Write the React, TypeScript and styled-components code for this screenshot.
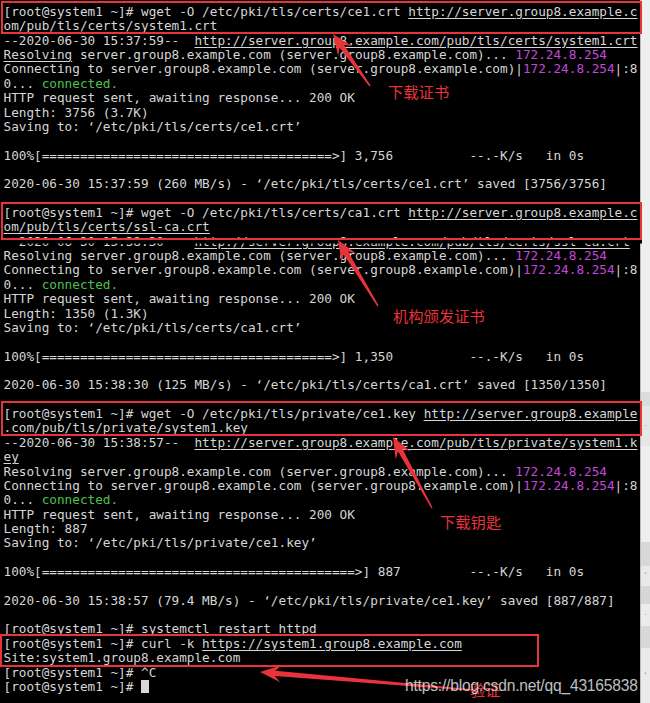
import React from "react";
import styled, { createGlobalStyle } from "styled-components";

const GlobalStyle = createGlobalStyle`
  html, body { margin: 0; padding: 0; background: #000; width: 650px; height: 703px; overflow: hidden; }
  #root { width: 650px; height: 703px; }
`;

const LH = 14.37;
const RED = "#e8333b";

const Screen = styled.div`
  position: relative;
  display: flex;
  width: 650px;
  height: 703px;
  overflow: hidden;
`;

const Terminal = styled.div`
  width: 640px;
  height: 703px;
  flex: none;
  box-sizing: border-box;
  padding: 5px 0 0 3.5px;
  background: #000;
  color: #d6d6d6;
  font-family: "DejaVu Sans Mono", monospace;
  font-size: 12.7px;
  white-space: pre;
`;

const Line = styled.div`
  height: ${LH}px;
  line-height: ${LH}px;
`;

/* a group of lines framed by a red annotation rectangle */
const Framed = styled.div<{ $t: number; $r: number; $b: number; $l: number; $mask?: boolean }>`
  position: relative;
  &::after {
    content: "";
    position: absolute;
    top: ${(p) => p.$t}px;
    right: ${(p) => p.$r}px;
    bottom: ${(p) => p.$b}px;
    left: ${(p) => p.$l}px;
    border: 2.5px solid ${RED};
    box-shadow: ${(p) => (p.$mask ? "0 3.5px 0 0 #000" : "none")};
    z-index: 1;
  }
`;

const Url = styled.span`
  text-decoration: underline;
  text-underline-offset: 2px;
`;

const Ip = styled.span`
  color: #c448d8;
`;

const Ok = styled.span`
  color: #4cc24c;
`;

const Cursor = styled.span`
  display: inline-block;
  width: 7.6px;
  height: 13px;
  vertical-align: -2px;
  background: #d8d8d8;
`;

const Scroll = styled.div`
  width: 10px;
  height: 703px;
  display: flex;
  flex-direction: column;
  background: #ececec;
  border-left: 1px solid #bdbdbd;
  box-sizing: border-box;
`;

const Seg = styled.div<{ $h: number; $tone: string }>`
  height: ${(p) => p.$h}px;
  background: ${(p) => p.$tone};
  flex: none;
  display: flex;
  align-items: center;
  justify-content: center;
  font-size: 7px;
  color: #777;
  font-family: "DejaVu Sans", sans-serif;
`;

const Label = styled.div<{ $l: number; $t: number }>`
  position: absolute;
  left: ${(p) => p.$l}px;
  top: ${(p) => p.$t}px;
  color: ${RED};
  font-family: "Noto Sans CJK SC", sans-serif;
  font-size: 15.3px;
  line-height: 17px;
  white-space: nowrap;
  z-index: 2;
`;

const Watermark = styled.div`
  position: absolute;
  left: 405px;
  top: 677px;
  color: rgba(235, 235, 235, 0.82);
  font-family: "Liberation Sans", Arial, sans-serif;
  font-size: 15.6px;
  line-height: 18px;
  letter-spacing: -0.2px;
  white-space: nowrap;
  z-index: 3;
`;

const ArrowLayer = styled.svg`
  position: absolute;
  left: 0;
  top: 0;
  width: 650px;
  height: 703px;
  pointer-events: none;
  z-index: 2;
`;

type Seg_ = [string, string];
const P = "[root@system1 ~]# ";
const bar = (n: number) => "100%[" + "=".repeat(n) + ">] ";

const resolving = (u: boolean): Seg_[] => [
  [u ? "u" : "t", "Resolving"],
  ["t", " server.group8.example.com (server.group8.example.com)... "],
  ["ip", "172.24.8.254"],
];
const connecting: Seg_[] = [
  ["t", "Connecting to server.group8.example.com (server.group8.example.com)|"],
  ["ip", "172.24.8.254"],
  ["t", "|:8"],
];
const connected: Seg_[] = [["t", "0... "], ["ok", "connected."]];
const http: Seg_[] = [["t", "HTTP request sent, awaiting response... 200 OK"]];

type Frame = { t: number; r: number; b: number; l: number; mask?: boolean };
type Block = { frame?: Frame; lines: Seg_[][] };

const blocks: Block[] = [
  {
    frame: { t: -4, r: -2, b: -0.3, l: -2.5 },
    lines: [
      [["t", P + "wget -O /etc/pki/tls/certs/ce1.crt "], ["u", "http://server.group8.example.c"]],
      [["u", "om/pub/tls/certs/system1.crt"]],
    ],
  },
  {
    lines: [
      [["t", "--2020-06-30 15:37:59--  "], ["u", "http://server.group8.example.com/pub/tls/certs/system1.crt"]],
      resolving(true),
      connecting,
      connected,
      http,
      [["t", "Length: 3756 (3.7K)"]],
      [["t", "Saving to: \u2018/etc/pki/tls/certs/ce1.crt\u2019"]],
      [],
      [["t", bar(38) + "3,756" + " ".repeat(10) + "--.-K/s   in 0s"]],
      [],
      [["t", "2020-06-30 15:37:59 (260 MB/s) - \u2018/etc/pki/tls/certs/ce1.crt\u2019 saved [3756/3756]"]],
      [],
    ],
  },
  {
    frame: { t: -4.2, r: -2, b: -5.5, l: -2.5, mask: true },
    lines: [
      [["t", P + "wget -O /etc/pki/tls/certs/ca1.crt "], ["u", "http://server.group8.example.c"]],
      [["u", "om/pub/tls/certs/ssl-ca.crt"]],
    ],
  },
  {
    lines: [
      [["t", "--2020-06-30 15:38:30--  "], ["u", "http://server.group8.example.com/pub/tls/certs/ssl-ca.crt"]],
      resolving(false),
      connecting,
      connected,
      http,
      [["t", "Length: 1350 (1.3K)"]],
      [["t", "Saving to: \u2018/etc/pki/tls/certs/ca1.crt\u2019"]],
      [],
      [["t", bar(38) + "1,350" + " ".repeat(10) + "--.-K/s   in 0s"]],
      [],
      [["t", "2020-06-30 15:38:30 (125 MB/s) - \u2018/etc/pki/tls/certs/ca1.crt\u2019 saved [1350/1350]"]],
      [],
    ],
  },
  {
    frame: { t: -6.4, r: -2, b: 0, l: -2.5 },
    lines: [
      [["t", P + "wget -O /etc/pki/tls/private/ce1.key "], ["u", "http://server.group8.example"]],
      [["u", ".com/pub/tls/private/system1.key"]],
    ],
  },
  {
    lines: [
      [["t", "--2020-06-30 15:38:57--  "], ["u", "http://server.group8.example.com/pub/tls/private/system1.k"]],
      [["u", "ey"]],
      resolving(false),
      connecting,
      connected,
      http,
      [["t", "Length: 887"]],
      [["t", "Saving to: \u2018/etc/pki/tls/private/ce1.key\u2019"]],
      [],
      [["t", bar(41) + "887" + " ".repeat(9) + "--.-K/s   in 0s"]],
      [],
      [["t", "2020-06-30 15:38:57 (79.4 MB/s) - \u2018/etc/pki/tls/private/ce1.key\u2019 saved [887/887]"]],
      [],
      [["t", P + "systemctl restart httpd"]],
    ],
  },
  {
    frame: { t: -3.3, r: 101, b: -1, l: -3.5 },
    lines: [
      [["t", P + "curl -k "], ["u", "https://system1.group8.example.com"]],
      [["t", "Site:system1.group8.example.com"]],
    ],
  },
  {
    lines: [
      [["t", P + "^C"]],
      [["t", P], ["cur", ""]],
    ],
  },
];

const renderSeg = ([k, s]: Seg_, i: number) => {
  if (k === "u") return <Url key={i}>{s}</Url>;
  if (k === "ip") return <Ip key={i}>{s}</Ip>;
  if (k === "ok") return <Ok key={i}>{s}</Ok>;
  if (k === "cur") return <Cursor key={i} />;
  return <React.Fragment key={i}>{s}</React.Fragment>;
};

const renderLines = (ls: Seg_[][]) =>
  ls.map((segs, i) => <Line key={i}>{segs.length ? segs.map(renderSeg) : " "}</Line>);

function arrowPoints(tx: number, ty: number, px: number, py: number, L = 21, W = 8.5) {
  const dx = px - tx;
  const dy = py - ty;
  const len = Math.hypot(dx, dy);
  const ux = dx / len;
  const uy = dy / len;
  const nx = -uy;
  const ny = ux;
  const neck = 2.6;
  const tail = 0.7;
  const bx = px - ux * L;
  const by = py - uy * L;
  const jx = px - ux * L * 0.72;
  const jy = py - uy * L * 0.72;
  const pts = [
    [tx + nx * tail, ty + ny * tail],
    [jx + nx * neck, jy + ny * neck],
    [bx + nx * W, by + ny * W],
    [px, py],
    [bx - nx * W, by - ny * W],
    [jx - nx * neck, jy - ny * neck],
    [tx - nx * tail, ty - ny * tail],
  ];
  return pts.map((p) => p[0].toFixed(1) + "," + p[1].toFixed(1)).join(" ");
}

const arrows = [
  { t: [370, 86], p: [333, 34] },
  { t: [378, 306], p: [338, 240] },
  { t: [432, 508], p: [393, 437] },
  { t: [472, 690], p: [260, 672] },
];

const notes = [
  { l: 388, t: 83, text: "下载证书" },
  { l: 393, t: 307, text: "机构颁发证书" },
  { l: 440, t: 513, text: "下载钥匙" },
  { l: 470, t: 681, text: "验证" },
];

const scrollSegs: { h: number; tone: string; g?: string }[] = [
  { h: 392, tone: "#efefef" },
  { h: 14, tone: "#dcdcdc" },
  { h: 40, tone: "#e6e6e6", g: "\u00b7" },
  { h: 96, tone: "#efefef" },
  { h: 24, tone: "#d8d8d8" },
  { h: 20, tone: "#e9e9e9", g: "\u02c5" },
  { h: 18, tone: "#d6d6d6" },
  { h: 22, tone: "#ececec", g: "\u00b7" },
  { h: 22, tone: "#d8d8d8" },
  { h: 55, tone: "#ebebeb", g: "\u02c5" },
];

export default function App() {
  return (
    <>
      <GlobalStyle />
      <Screen>
        <Terminal>
          {blocks.map((b, i) =>
            b.frame ? (
              <Framed key={i} $t={b.frame.t} $r={b.frame.r} $b={b.frame.b} $l={b.frame.l} $mask={b.frame.mask}>
                {renderLines(b.lines)}
              </Framed>
            ) : (
              <React.Fragment key={i}>{renderLines(b.lines)}</React.Fragment>
            )
          )}
        </Terminal>
        <Scroll>
          {scrollSegs.map((s, i) => (
            <Seg key={i} $h={s.h} $tone={s.tone}>
              {s.g}
            </Seg>
          ))}
        </Scroll>
        <ArrowLayer viewBox="0 0 650 703">
          {arrows.map((a, i) => (
            <polygon key={i} points={arrowPoints(a.t[0], a.t[1], a.p[0], a.p[1])} fill={RED} />
          ))}
        </ArrowLayer>
        {notes.map((n, i) => (
          <Label key={i} $l={n.l} $t={n.t}>
            {n.text}
          </Label>
        ))}
        <Watermark>https://blog.csdn.net/qq_43165838</Watermark>
      </Screen>
    </>
  );
}
